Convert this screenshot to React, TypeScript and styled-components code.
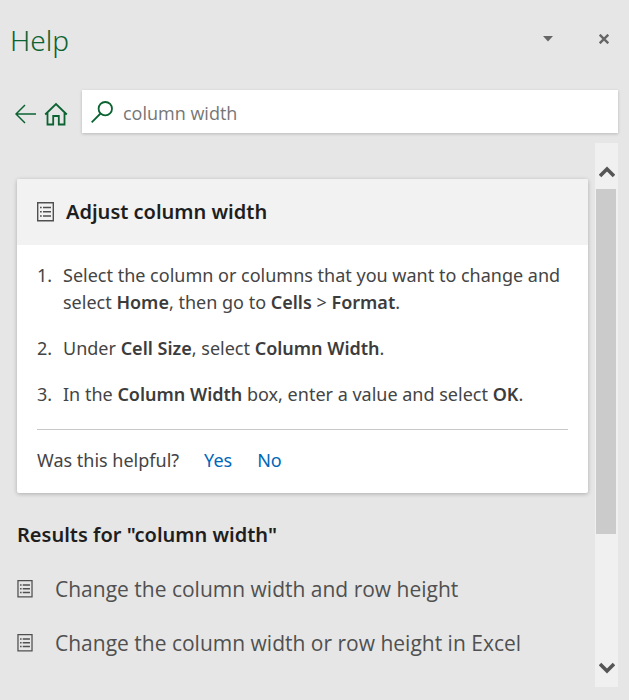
import React from "react";
import styled, { createGlobalStyle } from "styled-components";

const GlobalStyle = createGlobalStyle`
  * { box-sizing: border-box; }
  body {
    margin: 0;
    background: #e6e6e6;
    color: #444;
    font-family: "Noto Sans", "Open Sans", sans-serif;
    font-size: 18px;
    line-height: 27px;
  }
  button, input { font: inherit; }
`;

const Pane = styled.div`
  display: flex;
  flex-direction: column;
  min-height: 100vh;
  padding: 0 11px 13px 0;
`;

const TitleBar = styled.header`
  display: flex;
  align-items: flex-start;
  height: 90px;
  padding: 20px 0 0 10px;
`;

const Title = styled.h1`
  flex: 1;
  margin: 0;
  font-size: 28px;
  line-height: 40px;
  font-weight: 300;
  color: #0b6332;
`;

const IconButton = styled.button<{ $width: number; $height: number }>`
  display: flex;
  align-items: center;
  justify-content: center;
  flex: none;
  width: ${(p) => p.$width}px;
  height: ${(p) => p.$height}px;
  padding: 0;
  border: 0;
  background: none;
  cursor: pointer;
`;

const ScrollUpButton = styled(IconButton)`
  padding-top: 12px;
`;

const SearchRow = styled.div`
  display: flex;
  align-items: center;
`;

const Nav = styled.nav`
  display: flex;
  align-items: center;
  gap: 8px;
  padding: 4px 14px 0 15px;
`;

const SearchBox = styled.label`
  display: flex;
  flex: 1;
  align-items: center;
  gap: 10px;
  height: 43px;
  padding: 0 10px 0 9px;
  background: #fff;
  box-shadow: 0 1px 3px rgba(0, 0, 0, 0.2);
`;

const SearchInput = styled.input`
  flex: 1;
  min-width: 0;
  height: 43px;
  padding: 2px 0 0;
  border: 0;
  outline: 0;
  background: none;
  color: #767676;
  font-family: "Open Sans", "Noto Sans", sans-serif;
`;

const Main = styled.div`
  display: flex;
  flex: 1;
  gap: 7px;
  margin-top: 10px;
  padding-left: 17px;
`;

const Content = styled.main`
  flex: 1;
  min-width: 0;
  padding-top: 36px;
`;

const Card = styled.section`
  border-radius: 2px;
  background: #fff;
  box-shadow: 0 1px 4px rgba(0, 0, 0, 0.25);
`;

const CardHeader = styled.header`
  display: flex;
  align-items: center;
  gap: 12px;
  height: 66px;
  padding: 0 20px;
  border-radius: 2px 2px 0 0;
  background: #f2f2f2;
`;

const Heading = styled.h2`
  margin: 0;
  font-size: 20px;
  line-height: 28px;
  font-weight: 600;
  color: #1e1e1e;
`;

const CardBody = styled.div`
  padding: 17px 20px 0;
`;

const Steps = styled.ol`
  display: flex;
  flex-direction: column;
  gap: 19px;
  margin: 0;
  padding: 0 0 21px;
  list-style: none;
  counter-reset: step;
`;

const Step = styled.li`
  display: flex;
  counter-increment: step;

  &::before {
    content: counter(step) ".";
    flex: none;
    width: 26px;
  }
`;

const Term = styled.strong`
  font-weight: 600;
  color: #3c3c3c;
`;

const Feedback = styled.footer`
  display: flex;
  align-items: center;
  gap: 25px;
  height: 64px;
  padding-bottom: 2px;
  border-top: 1px solid #c8c8c8;
`;

const Answer = styled.button`
  padding: 0;
  border: 0;
  background: none;
  color: #0067b8;
  cursor: pointer;
`;

const ResultsHeading = styled(Heading)`
  margin: 28px 0 13px;
`;

const Results = styled.ul`
  margin: 0;
  padding: 0;
  list-style: none;
`;

const ResultLink = styled.a`
  display: flex;
  align-items: center;
  gap: 22px;
  height: 54px;
  font-family: "Open Sans", "Noto Sans", sans-serif;
  font-size: 21px;
  color: #505050;
  text-decoration: none;
`;

const ScrollBar = styled.div`
  display: flex;
  flex: none;
  flex-direction: column;
  width: 23px;
  background: #f0f0f0;
`;

const Track = styled.div`
  flex: 1;
  padding: 0 2px 0 1px;
`;

const Thumb = styled.div`
  height: 75%;
  background: #cbcbcb;
`;

const ListIcon = ({ small = false }: { small?: boolean }) => (
  <svg width={small ? 16 : 17} height={small ? 18 : 20} viewBox="0 0 17 20" fill="none" stroke="#505050" aria-hidden="true">
    <path d="M.7.7h15.600v18.100H.7z" strokeWidth="1.400" />
    <path d="M3 5.500h1.700M3 9.700h1.700M3 13.900h1.700M6 5.500h8M6 9.700h8M6 13.900h8" strokeWidth="1.500" />
  </svg>
);

const Chevron = ({ up = false }: { up?: boolean }) => (
  <svg width="16" height="14" viewBox="0 0 16 14" fill="none" stroke="#555" strokeWidth="3.6" aria-hidden="true">
    <path d={up ? "M1 11 8 4l7 7" : "M1 3l7 7 7-7"} />
  </svg>
);

const results = [
  "Change the column width and row height",
  "Change the column width or row height in Excel",
];

export default function App() {
  return (
    <>
      <GlobalStyle />
      <Pane>
        <TitleBar>
          <Title>Help</Title>
          <IconButton $width={84} $height={38} aria-label="Pane options">
            <svg width="10" height="6" viewBox="0 0 10 6" fill="#666">
              <path d="M0 0h10L5 5.5z" />
            </svg>
          </IconButton>
          <IconButton $width={28} $height={38} aria-label="Close">
            <svg width="10" height="10" viewBox="0 0 10 10" stroke="#666" strokeWidth="2.4">
              <path d="m.7.7 8.6 8.6M9.3.7.7 9.3" />
            </svg>
          </IconButton>
        </TitleBar>
        <SearchRow>
          <Nav aria-label="Help navigation">
            <IconButton $width={21} $height={24} aria-label="Back">
              <svg width="21" height="20" viewBox="0 0 21 20" fill="none" stroke="#0b6332" strokeWidth="1.5">
                <path d="M10 1 1 10l9 9M1 10h20" />
              </svg>
            </IconButton>
            <IconButton $width={24} $height={24} aria-label="Home">
              <svg width="24" height="24" viewBox="0 0 24 24" fill="none" stroke="#0b6332" strokeWidth="1.8">
                <path d="M1.200 12.500 12 2l10.800 10.500M3.500 11v11.500h5.700v-8.500h5.600v8.500h5.700V11" />
              </svg>
            </IconButton>
          </Nav>
          <SearchBox>
            <svg width="22" height="22" viewBox="0 0 22 22" fill="none" stroke="#0b6332" strokeWidth="1.8" aria-hidden="true">
              <circle cx="14.300" cy="7.700" r="6.700" />
              <path d="M9.500 12.500.7 21.300" />
            </svg>
            <SearchInput type="text" aria-label="Search help" defaultValue="column width" />
          </SearchBox>
        </SearchRow>
        <Main>
          <Content>
            <Card>
              <CardHeader>
                <ListIcon />
                <Heading>Adjust column width</Heading>
              </CardHeader>
              <CardBody>
                <Steps>
                  <Step>
                    <span>
                      Select the column or columns that you want to change and select <Term>Home</Term>, then go to{" "}
                      <Term>Cells</Term> &gt; <Term>Format</Term>.
                    </span>
                  </Step>
                  <Step>
                    <span>
                      Under <Term>Cell Size</Term>, select <Term>Column Width</Term>.
                    </span>
                  </Step>
                  <Step>
                    <span>
                      In the <Term>Column Width</Term> box, enter a value and select <Term>OK</Term>.
                    </span>
                  </Step>
                </Steps>
                <Feedback>
                  <span>Was this helpful?</span>
                  <Answer>Yes</Answer>
                  <Answer>No</Answer>
                </Feedback>
              </CardBody>
            </Card>
            <ResultsHeading>Results for "column width"</ResultsHeading>
            <Results>
              {results.map((text) => (
                <li key={text}>
                  <ResultLink href="#">
                    <ListIcon small />
                    {text}
                  </ResultLink>
                </li>
              ))}
            </Results>
          </Content>
          <ScrollBar>
            <ScrollUpButton $width={23} $height={46} aria-label="Scroll up">
              <Chevron up />
            </ScrollUpButton>
            <Track>
              <Thumb />
            </Track>
            <IconButton $width={23} $height={38} aria-label="Scroll down">
              <Chevron />
            </IconButton>
          </ScrollBar>
        </Main>
      </Pane>
    </>
  );
}
